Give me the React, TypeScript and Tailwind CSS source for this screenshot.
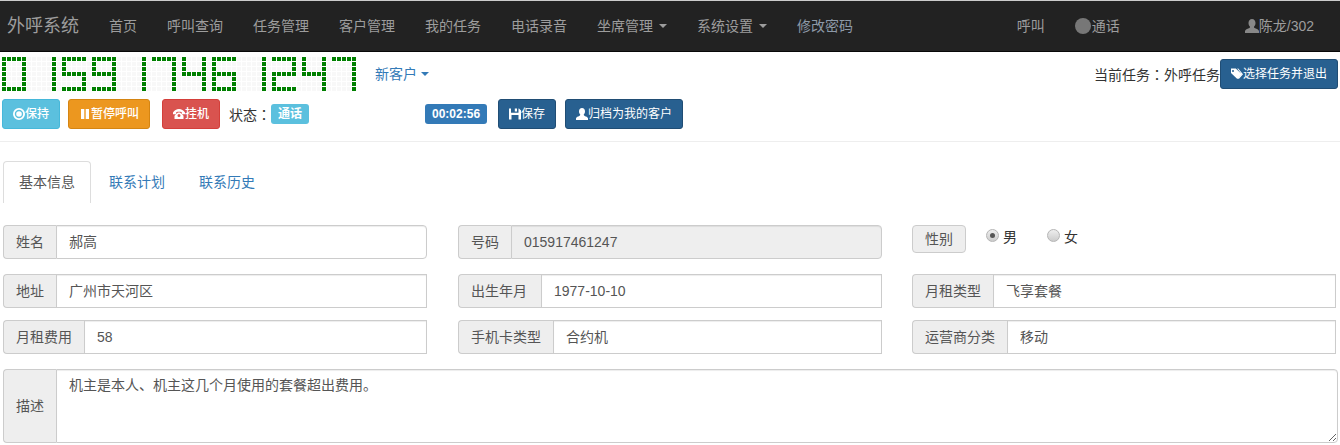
import { FC, ReactNode } from "react";

const font = `font-['Liberation_Sans','Noto_Sans_CJK_SC',sans-serif]`;

const DIGITS: Record<string, string[]> = {
  "0": ["11111", "10001", "10001", "10001", "10001", "10001", "11111"],
  "1": ["00001", "00001", "00001", "00001", "00001", "00001", "00001"],
  "2": ["11111", "00001", "00001", "11111", "10000", "10000", "11111"],
  "4": ["10001", "10001", "10001", "11111", "00001", "00001", "00001"],
  "5": ["11111", "10000", "10000", "11111", "00001", "00001", "11111"],
  "6": ["11111", "10000", "10000", "11111", "10001", "10001", "11111"],
  "7": ["11111", "00001", "00001", "00001", "00001", "00001", "00001"],
  "9": ["11111", "10001", "10001", "11111", "00001", "00001", "11111"],
};

const PHONE = "015917461247";

const LedDisplay = () => {
  const rows = Array.from({ length: 7 }, (_, r) =>
    PHONE.split("")
      .map((d) => DIGITS[d][r])
      .join("0")
  );
  return (
    <div className="grid grid-cols-[repeat(71,4px)] gap-px">
      {rows.flatMap((row, r) =>
        row
          .split("")
          .map((c, i) => (
            <div
              key={`${r}-${i}`}
              className={c === "1" ? "h-1 w-1 bg-[#008000]" : "h-1 w-1 bg-[#f8f8f8]"}
            />
          ))
      )}
    </div>
  );
};

const Caret: FC<{ className?: string }> = ({ className = "ml-[6px]" }) => (
  <span
    className={`${className} inline-block h-0 w-0 border-x-4 border-t-4 border-x-transparent border-t-current align-middle`}
  />
);

// centred full-width colon, the SC cut sets it low on the left
const Colon = () => <span className="font-['Noto_Sans_CJK_TC']">：</span>;

const NavItem: FC<{ children: ReactNode; caret?: boolean; className?: string }> = ({
  children,
  caret,
  className = "text-[#9d9d9d]",
}) => (
  <a className={`flex h-[50px] items-center px-[15px] text-sm ${className}`}>
    {children}
    {caret && <Caret />}
  </a>
);

const Icon: FC<{ d: string; className?: string }> = ({ d, className = "h-3 w-3" }) => (
  <svg viewBox="0 0 12 12" className={`${className} shrink-0 fill-current`}>
    <path d={d} fillRule="evenodd" />
  </svg>
);

const ICONS = {
  record:
    "M6 0a6 6 0 1 1 0 12A6 6 0 0 1 6 0zM6 1.800a4.200 4.200 0 1 0 0 8.400 4.200 4.200 0 0 0 0-8.400zM6 3.200a2.800 2.800 0 1 1 0 5.600 2.800 2.800 0 0 1 0-5.600z",
  pause: "M2 1h3.300v10H2zM6.700 1H10v10H6.700z",
  phone:
    "M0 4.500C1.400 2.300 3.500 1 6 1s4.600 1.300 6 3.500v1.700H8.800V4.300C7 3.700 5 3.700 3.200 4.300v1.900H0zM3.800 5.500 5 4.600h2l1.200.9 2.300 2.300V11h-9V7.800zM6 6a1.500 1.500 0 1 0 0 3 1.500 1.500 0 0 0 0-3z",
  save: "M0 .5h2v4.200h7.500V.5h.5l2 2v9H0zM5.800.5h2.200v3H5.800zM2.500 7h7v4.500h-7z",
  user: "M6 0c1.900 0 3 1.500 3 3.400 0 1.400-.6 2.500-1.300 3.200 0 .7.300 1.100 1 1.400 1.500.5 2.800 1.100 3.300 2.200V12H0v-1.800c.5-1.100 1.800-1.700 3.300-2.200.7-.3 1-.7 1-1.400C3.600 5.900 3 4.800 3 3.400 3 1.500 4.100 0 6 0z",
  tags: "M0 .5h4.800l6 5.700L6.300 11 0 5zM2 2a1 1 0 1 0 0 2 1 1 0 0 0 0-2zM6.200.5h1L12 6.200 7.800 11l-.8-.7 3.700-4.100z",
};

type Tone = "info" | "warning" | "danger" | "primary";

const TONES: Record<Tone, string> = {
  info: "bg-[#5bc0de] border-[#46b8da] font-medium",
  warning: "bg-[#ec971f] border-[#d58512] font-medium",
  danger: "bg-[#d9534f] border-[#d43f3a] font-medium",
  primary: "bg-[#286090] border-[#204d74]",
};

const Btn: FC<{ tone: Tone; icon: string; children: ReactNode; className?: string }> = ({
  tone,
  icon,
  children,
  className = "",
}) => (
  <button
    className={`flex h-[30px] shrink-0 items-center rounded-[3px] border px-[10px] text-xs text-white ${TONES[tone]} ${className}`}
  >
    <Icon d={icon} />
    {children}
  </button>
);

const Addon: FC<{ children: ReactNode; className?: string }> = ({ children, className = "" }) => (
  <span
    className={`flex shrink-0 items-center rounded-l border-y border-l border-[#ccc] bg-[#eee] px-3 text-sm text-[#555] ${className}`}
  >
    {children}
  </span>
);

const Field: FC<{
  label: string;
  value: string;
  disabled?: boolean;
  rounded?: boolean;
  addonClass?: string;
}> = ({ label, value, disabled, rounded, addonClass }) => (
  <div className="flex h-[34px] w-[424px]">
    <Addon className={addonClass}>{label}</Addon>
    <input
      readOnly
      value={value}
      className={`min-w-0 flex-1 border border-[#ccc] px-3 text-sm text-[#555] shadow-[inset_0_1px_1px_rgba(0,0,0,0.075)] outline-none ${
        disabled ? "bg-[#eee]" : "bg-white"
      } ${rounded ? "rounded-r" : ""}`}
    />
  </div>
);

const Radio: FC<{ label: string; checked?: boolean }> = ({ label, checked }) => (
  <label className="flex items-start text-sm text-[#333]">
    <span className="mt-[4px] flex h-[13px] w-[13px] items-center justify-center rounded-full border border-[#b5b5b5] bg-gradient-to-b from-[#eee] to-[#ccc]">
      {checked && <span className="h-[5px] w-[5px] rounded-full bg-[#555]" />}
    </span>
    <span className="ml-[4px] mt-[2px]">{label}</span>
  </label>
);

export default function App() {
  return (
    <div className={`${font} h-[445px] w-[1340px] overflow-hidden bg-white text-sm text-[#333]`}>
      <nav className="flex h-[52px] items-center border-t border-b border-t-[#ccc] border-b-[#080808] bg-[#222]">
        <a className="pl-[7px] pr-[15px] text-lg text-[#9d9d9d]">外呼系统</a>
        <NavItem>首页</NavItem>
        <NavItem>呼叫查询</NavItem>
        <NavItem>任务管理</NavItem>
        <NavItem>客户管理</NavItem>
        <NavItem>我的任务</NavItem>
        <NavItem>电话录音</NavItem>
        <NavItem caret>坐席管理</NavItem>
        <NavItem caret>系统设置</NavItem>
        <NavItem className="text-[#8d99a8]">修改密码</NavItem>
        <div className="ml-auto flex items-center pr-[11px]">
          <NavItem>呼叫</NavItem>
          <NavItem>
            <span className="h-4 w-4 rounded-full bg-[#777]" />
            <span className="ml-px">通话</span>
          </NavItem>
          <div className="ml-[95px]">
            <NavItem>
              <Icon d={ICONS.user} className="h-[14px] w-[14px] text-[#888]" />
              <span>陈龙/302</span>
            </NavItem>
          </div>
        </div>
      </nav>

      <div className="flex h-[47px] items-start pl-[2px] pr-[2px]">
        <div className="mt-[5px]">
          <LedDisplay />
        </div>
        <a className="ml-[19px] mt-[12px] flex items-center text-sm text-[#337ab7]">
          新客户
          <Caret className="ml-[4px]" />
        </a>
        <div className="ml-auto mt-[7px] flex items-center">
          <span className="text-sm">
            当前任务
            <Colon />
            外呼任务
          </span>
          <Btn tone="primary" icon={ICONS.tags}>
            选择任务并退出
          </Btn>
        </div>
      </div>

      <div className="flex items-center pl-[2px]">
        <Btn tone="info" icon={ICONS.record}>
          保持
        </Btn>
        <Btn tone="warning" icon={ICONS.pause} className="ml-2">
          暂停呼叫
        </Btn>
        <Btn tone="danger" icon={ICONS.phone} className="ml-3">
          挂机
        </Btn>
        <span className="ml-[9px] text-sm">
          状态
          <Colon />
        </span>
        <span className="flex h-5 w-[38px] items-center justify-center rounded-[3px] bg-[#5bc0de] text-xs font-bold text-white">
          通话
        </span>
        <span className="ml-[116px] flex h-5 w-[62px] items-center justify-center rounded-[3px] bg-[#337ab7] text-xs font-bold text-white">
          00:02:56
        </span>
        <Btn tone="primary" icon={ICONS.save} className="ml-[11px]">
          保存
        </Btn>
        <Btn tone="primary" icon={ICONS.user} className="ml-[9px]">
          归档为我的客户
        </Btn>
      </div>

      <hr className="mt-3 border-t border-[#eee]" />

      <div className="flex pl-[3px] pt-[19px]">
        <a className="flex h-[42px] items-center rounded-t border-x border-t border-[#ddd] bg-white px-[15px] pb-px text-[#555]">
          基本信息
        </a>
        <a className="ml-[3px] flex h-[42px] items-center px-[15px] text-sm text-[#337ab7]">联系计划</a>
        <a className="ml-[4px] flex h-[42px] items-center px-[15px] text-sm text-[#337ab7]">联系历史</a>
      </div>

      <div className="pl-[3px] pt-[22px]">
        <div className="grid grid-cols-[424px_424px_426px] gap-x-[31px] gap-y-[15px]">
          <Field label="姓名" value="郝高" rounded />
          <Field label="号码" value="015917461247" disabled rounded />
          <div className="-ml-px flex h-[34px] items-start">
            <span className="flex h-7 w-[54px] items-center justify-center rounded-sm border border-[#ccc] bg-[#eee] text-[#555]">
              性别
            </span>
            <div className="ml-5 flex gap-[30px]">
              <Radio label="男" checked />
              <Radio label="女" />
            </div>
          </div>
        </div>
        <div className="mt-[15px] grid grid-cols-[424px_424px_426px] gap-x-[31px] gap-y-3">
          <Field label="地址" value="广州市天河区" />
          <Field label="出生年月" value="1977-10-10" addonClass="w-[83px]" />
          <div className="-ml-px">
            <Field label="月租类型" value="飞享套餐" />
          </div>
          <Field label="月租费用" value="58" />
          <Field label="手机卡类型" value="合约机" />
          <div className="-ml-px">
            <Field label="运营商分类" value="移动" />
          </div>
        </div>
        <div className="mt-[15px] flex h-[74px] w-[1335px]">
          <Addon>描述</Addon>
          <textarea
            readOnly
            value="机主是本人、机主这几个月使用的套餐超出费用。"
            className="min-w-0 flex-1 rounded-r border border-[#ccc] px-3 py-[5px] text-sm text-[#555] shadow-[inset_0_1px_1px_rgba(0,0,0,0.075)] outline-none"
          />
        </div>
      </div>
    </div>
  );
}
